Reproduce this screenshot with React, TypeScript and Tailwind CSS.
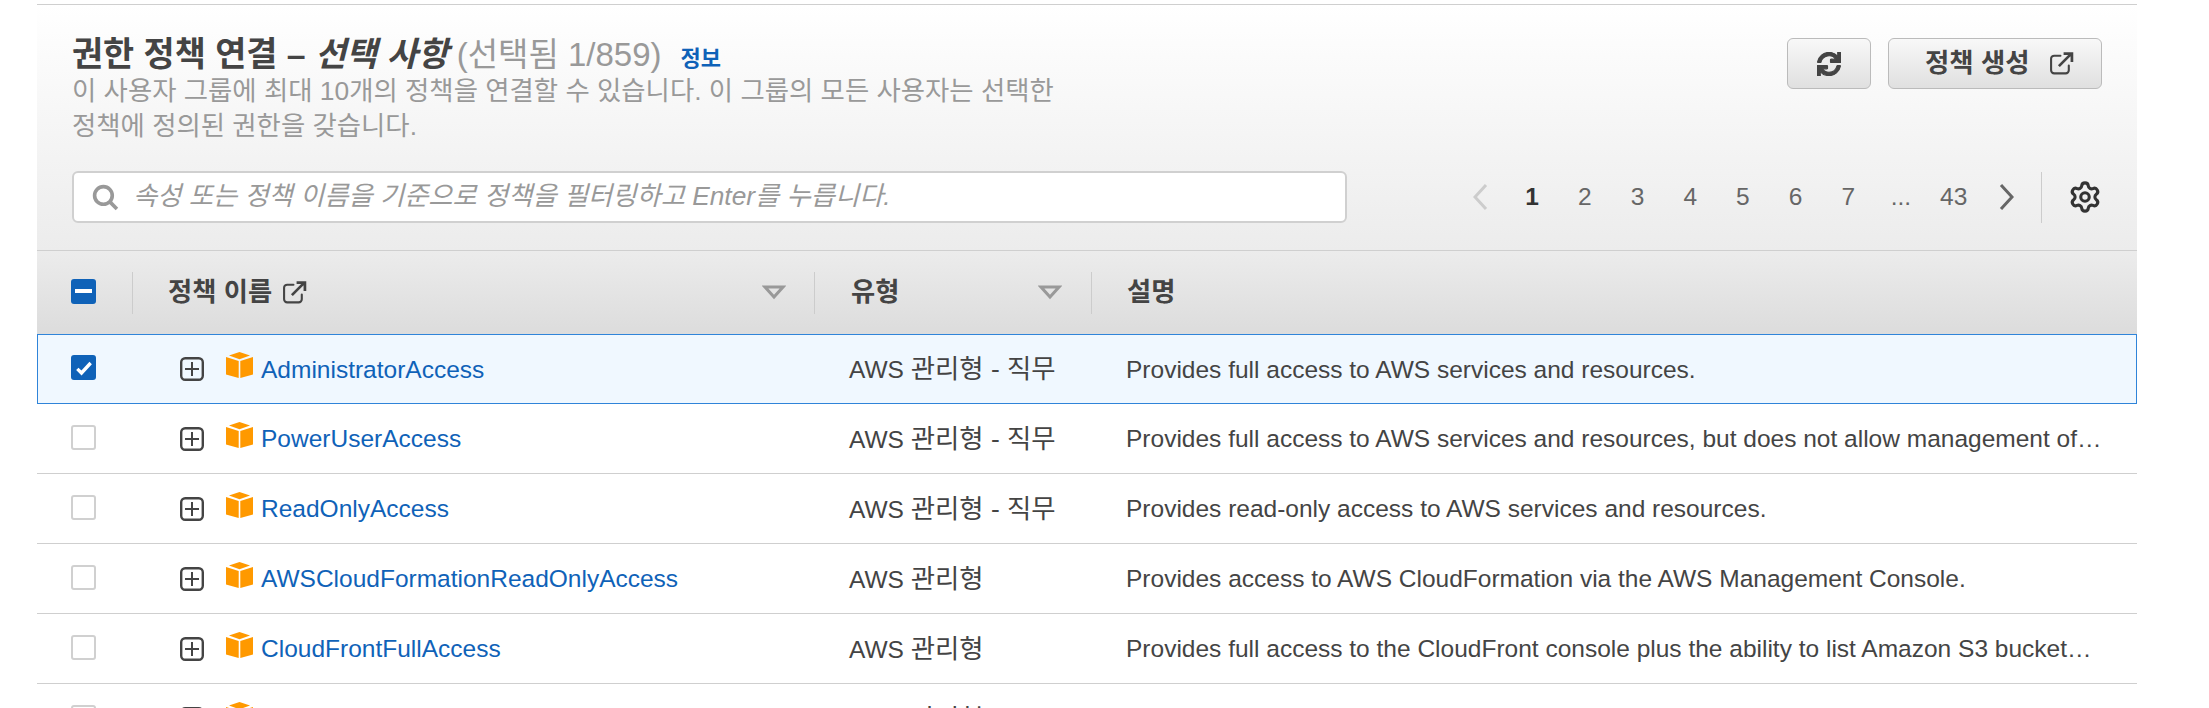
import React from "react";
import { FaSync } from "react-icons/fa";
import { Settings } from "lucide-react";

const FONT = "font-['Liberation_Sans','Noto_Sans_CJK_KR',sans-serif]";

function Ext({ className = "" }: { className?: string }) {
  return (
    <svg viewBox="0 0 24 24" className={className} fill="none" stroke="currentColor" strokeWidth="2">
      <path d="M11 4.5H5a3 3 0 0 0-3 3v11a3 3 0 0 0 3 3h11a3 3 0 0 0 3-3V14" strokeLinecap="round" />
      <path d="M9.5 14.5 21 3M14 2.5h8v8" strokeWidth="2.6" />
    </svg>
  );
}

function Cube() {
  return (
    <svg viewBox="0 0 27 26" className="w-[27px] h-[26px] shrink-0" fill="#ff9900">
      <path d="M13.5 0 24 3.5 13.5 7.3 3 3.5Z" />
      <path d="M0 5 12.7 9v17L0 22.5Z" />
      <path d="M27 5 14.3 9v17L27 22.5Z" />
    </svg>
  );
}

function Plus() {
  return (
    <svg viewBox="0 0 24 24" className="w-[24px] h-[24px] shrink-0" fill="none" stroke="#444" strokeWidth="2.4">
      <rect x="1.2" y="1.2" width="21.6" height="21.6" rx="4" />
      <path d="M12 5v14M5 12h14" strokeWidth="2" />
    </svg>
  );
}

function Caret() {
  return (
    <svg viewBox="0 0 24 15" className="w-[24px] h-[15px]" fill="none" stroke="#999" strokeWidth="3">
      <path d="M3 2h18L12 12Z" />
    </svg>
  );
}

const rows = [
  ["AdministratorAccess", "관리형 - 직무", "Provides full access to AWS services and resources."],
  ["PowerUserAccess", "관리형 - 직무", "Provides full access to AWS services and resources, but does not allow management of Users and groups."],
  ["ReadOnlyAccess", "관리형 - 직무", "Provides read-only access to AWS services and resources."],
  ["AWSCloudFormationReadOnlyAccess", "관리형", "Provides access to AWS CloudFormation via the AWS Management Console."],
  ["CloudFrontFullAccess", "관리형", "Provides full access to the CloudFront console plus the ability to list Amazon S3 buckets via the S3 console."],
  ["CloudWatchFullAccess", "관리형", "Provides full access to CloudWatch."],
];

function Row({ r, i }: { r: string[]; i: number }) {
  const sel = i === 0;
  return (
    <div className={sel ? "flex items-center h-[70px] shrink-0 border border-[#2f84d9] bg-[#f0f8ff]" : "flex items-center h-[70px] shrink-0 border-b border-[#cfcfcf] px-px"}>
      <div className="w-[93px] pl-[33px] pb-[3px] flex items-center shrink-0">
        {sel ? (
          <span className="w-[25px] h-[25px] rounded-[3px] bg-[#0f62b8] flex items-center justify-center">
            <svg viewBox="0 0 24 24" className="w-[20px] h-[20px]" fill="none" stroke="#fff" strokeWidth="4"><path d="M4 13l5 5L20 6" /></svg>
          </span>
        ) : (
          <span className="w-[25px] h-[25px] rounded-[3px] bg-white border-2 border-[#d0d0d0]" />
        )}
      </div>
      <div className="w-[717px] shrink-0 flex items-center pl-[49px]">
        <Plus />
        <span className="ml-[22px] mb-[8px]"><Cube /></span>
        <a className="ml-[8px] pt-[2px] text-[24.5px] text-[#0f62b8]">{r[0]}</a>
      </div>
      <div className="w-[278px] shrink-0 pl-px pt-[2px] text-[24.5px] text-[#444] whitespace-nowrap">
        AWS <span className="text-[26.4px]">{r[1]}</span>
      </div>
      <div className="w-[976.5px] shrink-0 pt-[2px] text-[24.5px] text-[#444] truncate">{r[2]}</div>
    </div>
  );
}

export default function App() {
  return (
    <div className={`w-[2209px] h-[708px] overflow-hidden bg-white ${FONT}`}>
      <div className="ml-[37px] w-[2100px] h-[708px] flex flex-col overflow-hidden">
        <div className="h-px mt-[4px] bg-[#cfcfcf] shrink-0" />
        <div className="h-[246px] shrink-0 bg-gradient-to-b from-white to-[#ececec] border-b border-[#cfcfcf] px-[35px] pt-[34px] flex flex-col">
          <div className="flex justify-between">
            <div className="w-[1050px]">
              <div className="flex items-baseline text-[33px] leading-[31px] whitespace-nowrap">
                <span className="font-bold text-[#444] text-[33.8px]">권한 정책 연결 – <i>선택 사항</i></span>
                <span className="ml-[8px] text-[#999]">(선택됨 1/859)</span>
                <span className="ml-[19px] text-[22px] font-bold text-[#0f62b8]">정보</span>
              </div>
              <p className="text-[26.4px] leading-[35px] text-[#999]">
                이 사용자 그룹에 최대 10개의 정책을 연결할 수 있습니다. 이 그룹의 모든 사용자는 선택한
                <br />
                정책에 정의된 권한을 갖습니다.
              </p>
            </div>
            <div className="flex gap-[17px] -mt-px">
              <button className="w-[84px] h-[51px] rounded-[6px] border border-[#bbb] bg-gradient-to-b from-[#f8f8f8] to-[#e0e0e0] flex items-center justify-center text-[#444]">
                <FaSync className="w-[24px] h-[24px]" stroke="currentColor" strokeWidth={24} />
              </button>
              <button className="w-[214px] h-[51px] rounded-[6px] border border-[#bbb] bg-gradient-to-b from-[#f8f8f8] to-[#e0e0e0] flex items-center pl-[36px] gap-[20px] text-[26.4px] font-bold text-[#444]">
                <span>정책 생성</span>
                <Ext className="w-[25px] h-[25px]" />
              </button>
            </div>
          </div>
          <div className="flex items-center mt-[27px] justify-between">
            <div className="w-[1275px] h-[52px] rounded-[6px] border-2 border-[#d0d0d0] bg-white flex items-center pl-[18px]">
              <svg viewBox="0 0 26 26" className="w-[27px] h-[27px] shrink-0" fill="none" stroke="#999" strokeWidth="3.5">
                <circle cx="11" cy="11" r="8.5" />
                <path d="M17 17l7 7" />
              </svg>
              <span className="ml-[14px] text-[26.3px] italic text-[#999]">속성 또는 정책 이름을 기준으로 정책을 필터링하고 Enter를 누릅니다.</span>
            </div>
            <div className="flex items-center h-[51px] text-[24.5px] text-[#666]">
              <svg viewBox="0 0 15 28" className="w-[15px] h-[28px] mr-[18px]" fill="none" stroke="#ccc" strokeWidth="3"><path d="M13 2 2 14l11 12" /></svg>
              <span className="w-[52.7px] text-center font-bold text-[#333]">1</span>
              <span className="w-[52.7px] text-center">2</span>
              <span className="w-[52.7px] text-center">3</span>
              <span className="w-[52.7px] text-center">4</span>
              <span className="w-[52.7px] text-center">5</span>
              <span className="w-[52.7px] text-center">6</span>
              <span className="w-[52.7px] text-center">7</span>
              <span className="w-[52.7px] text-center">...</span>
              <span className="w-[52.7px] text-center">43</span>
              <svg viewBox="0 0 15 28" className="w-[15px] h-[28px] ml-[19px] mr-[27px]" fill="none" stroke="#666" strokeWidth="3"><path d="M2 2l11 12L2 26" /></svg>
              <div className="w-px h-[51px] bg-[#ccc] mr-[26px]" />
              <Settings size={34} strokeWidth={2.2} color="#333" />
            </div>
          </div>
        </div>
        <div className="h-[83px] shrink-0 bg-gradient-to-b from-[#ececec] to-[#dcdcdc] flex items-center text-[26.3px] font-bold text-[#444]">
          <div className="w-[96px] pl-[34px] flex items-center h-[42px] border-r border-[#ccc] shrink-0">
            <span className="w-[25px] h-[25px] rounded-[3px] mb-[3px] bg-[#0f62b8] flex items-center justify-center">
              <span className="w-[17px] h-[4px] bg-white" />
            </span>
          </div>
          <div className="w-[682px] shrink-0 flex items-center pl-[35px] h-[42px] border-r border-[#ccc]">
            <span>정책 이름</span>
            <Ext className="w-[25px] h-[25px] ml-[10px]" />
            <span className="ml-auto mr-[28px]"><Caret /></span>
          </div>
          <div className="w-[277px] shrink-0 flex items-center pl-[36px] h-[42px] border-r border-[#ccc]">
            <span>유형</span>
            <span className="ml-auto mr-[29px]"><Caret /></span>
          </div>
          <div className="pl-[35px]">설명</div>
        </div>
        {rows.map((r, i) => (
          <Row key={r[0]} r={r} i={i} />
        ))}
      </div>
    </div>
  );
}
